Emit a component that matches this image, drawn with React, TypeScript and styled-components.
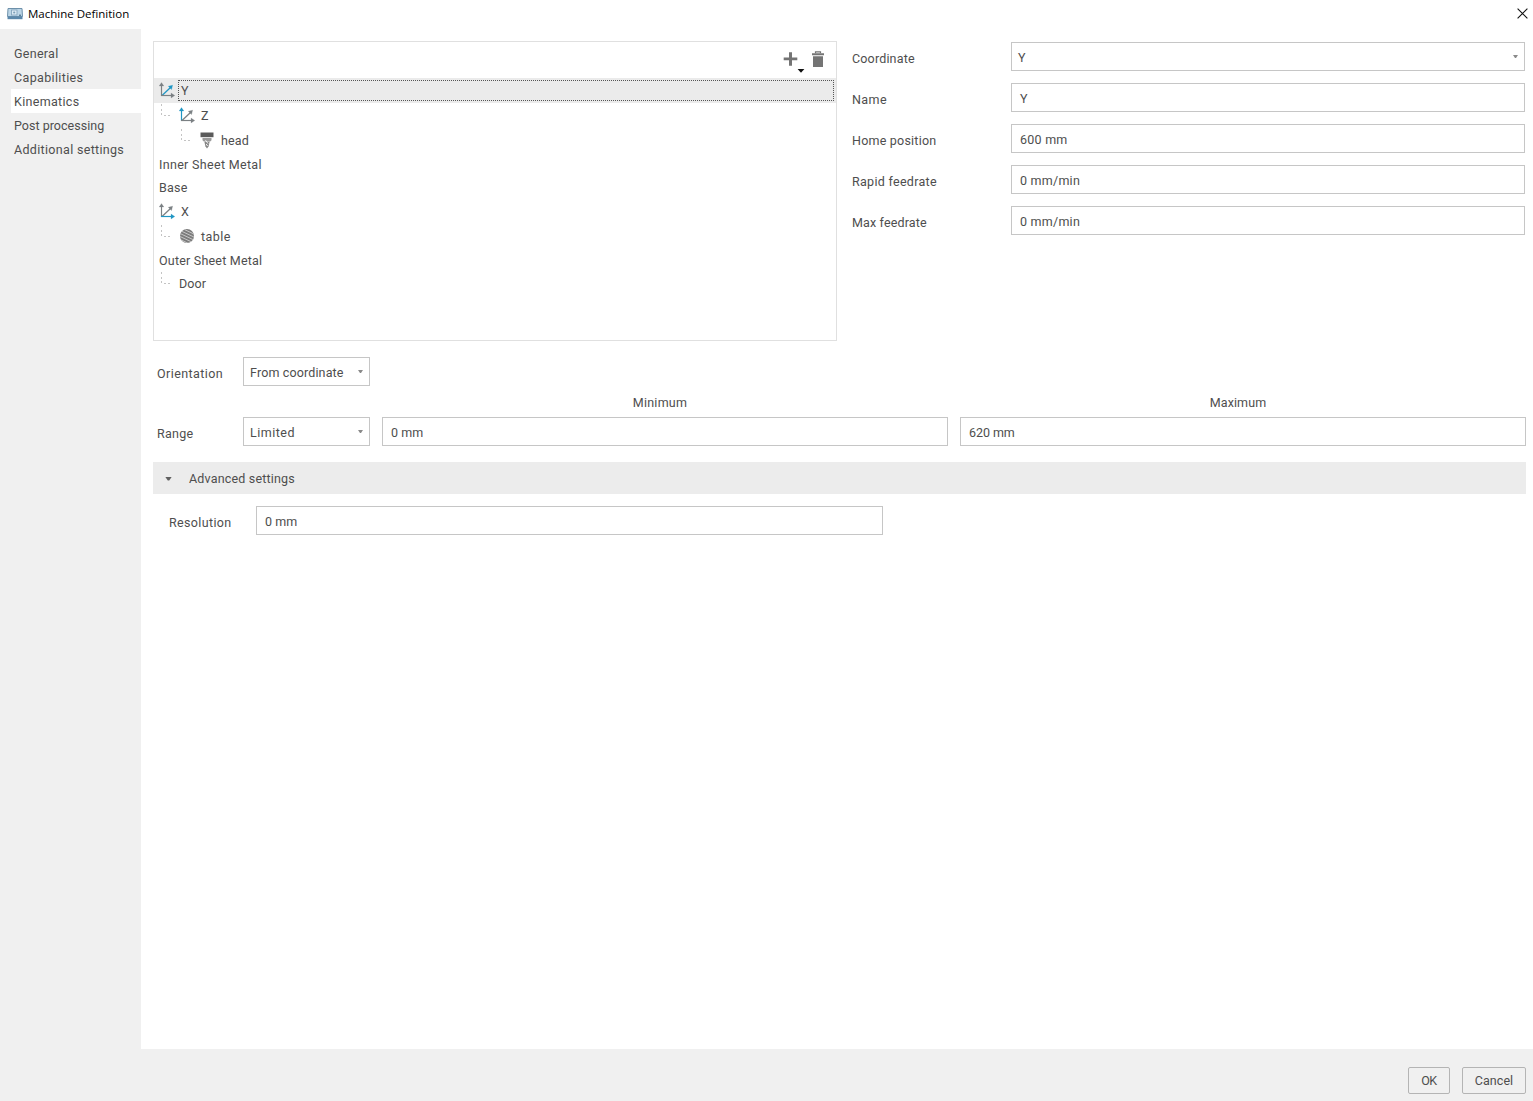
import React from "react";
import styled, { createGlobalStyle } from "styled-components";

const GlobalStyle = createGlobalStyle`
  * { box-sizing: border-box; }
  body { margin: 0; background: #fff; font-family: Roboto, "Liberation Sans", sans-serif; font-size: 12.5px; color: #4e4e4e; }
  svg { display: block; flex: none; }
`;

const Window = styled.div`
  width: 1533px;
  height: 1101px;
  display: flex;
  flex-direction: column;
  background: #f0f0f0;
  overflow: hidden;
`;

const TitleBar = styled.header`
  height: 29px;
  flex: none;
  display: flex;
  align-items: center;
  gap: 5px;
  padding: 0 5px 2px 7px;
  background: #fff;
`;

const Title = styled.span`
  flex: 1;
  font-family: "Open Sans", "Noto Sans", sans-serif;
  font-size: 11.5px;
  line-height: 16px;
  color: #000;
`;

const Body = styled.div`
  display: flex;
  height: 1020px;
  flex: none;
`;

const Sidebar = styled.nav`
  width: 141px;
  flex: none;
  padding: 12px 0 0 11px;
`;

const NavItem = styled.div<{ $active?: boolean }>`
  height: 24px;
  line-height: 26px;
  padding-left: 3px;
  background: ${(p) => (p.$active ? "#fff" : "transparent")};
`;

const Content = styled.main`
  flex: 1;
  min-width: 0;
  padding: 12px 7px 0 12px;
  background: #fff;
`;

const Text = styled.span<{ $track?: number }>`
  letter-spacing: ${(p) => (p.$track ?? 0.3) - 0.06}px;
  white-space: pre;
`;

const TopArea = styled.div`
  display: flex;
  gap: 15px;
  height: 300px;
`;

const TreePanel = styled.section`
  width: 684px;
  flex: none;
  border: 1px solid #e0e0e0;
`;

const Toolbar = styled.div`
  height: 36px;
  display: flex;
  justify-content: flex-end;
  padding: 9px 11px 0 0;
  gap: 6px;
`;

const Row = styled.div<{ $selected?: boolean; $icon?: boolean }>`
  height: ${(p) => (p.$icon ? 25 : 23)}px;
  display: flex;
  align-items: center;
  padding: 0 2px 0 5px;
  background: ${(p) => (p.$selected ? "#ebebeb" : "transparent")};
`;

const Indent = styled.div`
  width: 20px;
  flex: none;
`;

const RowLabel = styled.div<{ $icon?: boolean; $wide?: boolean; $focused?: boolean }>`
  flex: 1;
  height: 21px;
  line-height: 19px;
  margin-left: ${(p) => (p.$icon ? 2 : 0)}px;
  padding-left: ${(p) => (p.$icon ? 2 : 0)}px;
  border: ${(p) => (p.$focused ? "1px dotted #555" : "1px solid transparent")};
  border-left-width: ${(p) => (p.$icon ? 1 : 0)}px;
`;

const Form = styled.section`
  flex: 1;
  display: flex;
  flex-direction: column;
  gap: 12px;
  padding: 1px 1px 0 0;
`;

const FormRow = styled.div`
  display: flex;
  height: 29px;
`;

const Label = styled.label<{ $w: number }>`
  width: ${(p) => p.$w}px;
  height: 29px;
  flex: none;
  line-height: 33px;
`;

const Field = styled.div<{ $w?: number; $select?: boolean }>`
  ${(p) => (p.$w ? `width: ${p.$w}px; flex: none;` : "flex: 1;")}
  height: 29px;
  line-height: 29px;
  display: flex;
  justify-content: space-between;
  padding: 0 6px 0 ${(p) => (p.$select ? 6 : 8)}px;
  border: 1px solid #c6c6c6;
  background: #fff;
`;

const Caret = styled.i`
  width: 5px;
  height: 3px;
  margin-top: 12px;
  background: #8a8a8a;
  clip-path: polygon(0 0, 100% 0, 60% 100%, 40% 100%);
`;

const OrientationRow = styled.div`
  display: flex;
  padding: 0 0 0 4px;
  margin-top: 16px;
`;

const RangeHeader = styled.div`
  display: grid;
  grid-template-columns: 566px 566px;
  gap: 12px;
  height: 31px;
  padding: 0 0 0 224px;
  line-height: 33px;
  text-align: center;
`;

const RangeRow = styled.div`
  display: flex;
  gap: 12px;
  padding-left: 4px;
`;

const RangeType = styled.div`
  display: flex;
  width: 213px;
  flex: none;
`;

const SectionHeader = styled.div`
  display: flex;
  align-items: center;
  height: 32px;
  margin-top: 16px;
  padding: 1px 0 0 12px;
  gap: 17px;
  background: #ececec;
`;

const SectionCaret = styled.i`
  width: 7px;
  height: 4px;
  background: #606060;
  clip-path: polygon(0 0, 100% 0, 60% 100%, 40% 100%);
`;

const SectionBody = styled.div`
  display: flex;
  padding: 12px 0 0 16px;
`;

const Footer = styled.footer`
  flex: 1;
  display: flex;
  justify-content: flex-end;
  gap: 12px;
  padding: 18px 7px 0 0;
`;

const Button = styled.div<{ $w: number }>`
  width: ${(p) => p.$w}px;
  height: 27px;
  line-height: 26px;
  text-align: center;
  border: 1px solid #b4b4b4;
  border-radius: 2px;
`;

const BLUE = "#1f96c4";
const GRAY = "#7b8083";

function AxisIcon({ axis }: { axis: "X" | "Y" | "Z" }) {
  const c = (a: string) => (a === axis ? BLUE : GRAY);
  return (
    <svg width="17" height="17" viewBox="0 0 17 17" fill="none" strokeWidth="1.2">
      <g stroke={c("Y")} fill={c("Y")}>
        <path d="M3 13.5 11.5 5.5" />
        <path d="M13.6 3.2 12.5 7.6 9.3 4.3Z" strokeWidth=".3" />
      </g>
      <g stroke={c("Z")} fill={c("Z")}>
        <path d="M2.5 14V3" />
        <path d="M2.5 0.6 4.9 4H.1Z" strokeWidth=".2" />
      </g>
      <g stroke={c("X")} fill={c("X")}>
        <path d="M2 13.5H13" />
        <path d="M15.8 13.5 12 11V16Z" strokeWidth=".2" />
      </g>
    </svg>
  );
}

function HeadIcon() {
  return (
    <svg width="17" height="17" viewBox="0 0 17 17">
      <path d="M1.5 0.5H14.5V5.2H1.5Z" fill="#5a5a5a" />
      <path d="M3.5 6H12.5V8.2L11.2 9.6H4.8L3.5 8.2Z" fill="#999" />
      <path d="M5.4 9.8H10.6L9.6 14.2 8 16.6 6.4 14.2Z" fill="#858585" />
      <path d="M6.5 8.2 9 11.5M7.2 12 8.6 14" stroke="#f5f5f5" strokeWidth="1" />
    </svg>
  );
}

function TableIcon() {
  return (
    <svg width="17" height="17" viewBox="0 0 17 17">
      <defs>
        <clipPath id="disc"><circle cx="8" cy="8" r="7" /></clipPath>
      </defs>
      <circle cx="8" cy="8" r="7" fill="#7c7c7c" />
      <g clipPath="url(#disc)" stroke="#cfcfcf" strokeWidth=".9">
        <path d="M0 -1 17 7M0 2 17 10M0 5 17 13M0 8 17 16M0 11 17 19" />
      </g>
    </svg>
  );
}

function Guide() {
  return (
    <svg width="20" height="25" viewBox="0 0 20 25" fill="none" stroke="#c4c4c4" shapeRendering="crispEdges">
      <path d="M2.5 1V13" strokeDasharray="2 2.5" />
      <path d="M5 12.5H12" strokeDasharray="2 2" />
    </svg>
  );
}

function AddIcon() {
  return (
    <svg width="23" height="24" viewBox="0 0 23 24">
      <path d="M7 1.2H10V6.5H15.3V9.3H10V14.7H7V9.3H1.7V6.5H7Z" fill="#747474" />
      <path d="M15.6 18H22.4L19 21.8Z" fill="#111" />
    </svg>
  );
}

function TrashIcon() {
  return (
    <svg width="14" height="18" viewBox="0 0 14 18">
      <path d="M4.5 2.2V.8H9.5V2.2" fill="none" stroke="#747474" strokeWidth="1.2" />
      <path d="M1 2.2H13V4.2H1ZM2 5.2H12V16H2Z" fill="#747474" />
    </svg>
  );
}

function MachineIcon() {
  return (
    <svg width="16" height="12" viewBox="0 0 16 12">
      <path d="M1 .5H15L15.5 8.5H.5Z" fill="#bcd5e6" stroke="#6d90aa" />
      <path d="M.5 8.5H15.5V11.2H.5Z" fill="#5b87aa" />
      <rect x="4.5" y="2" width="5.5" height="5" fill="#dceaf3" stroke="#7d9fb8" strokeWidth=".8" />
      <circle cx="7.2" cy="4.5" r="1.1" fill="#7d9fb8" />
      <path d="M12 7.2H14" stroke="#345a78" />
    </svg>
  );
}

function CloseIcon() {
  return (
    <svg width="11" height="11" viewBox="0 0 11 11">
      <path d="M.6 .6 10.4 10.4M10.4 .6 .6 10.4" stroke="#111" strokeWidth="1.1" />
    </svg>
  );
}

const nav = [
  { label: "General", track: 0.34 },
  { label: "Capabilities", track: 0.42 },
  { label: "Kinematics", track: 0.38, active: true },
  { label: "Post processing", track: 0.08 },
  { label: "Additional settings", track: 0.38 },
];

type Node = { label: string; track?: number; depth: number; icon?: React.ReactNode; selected?: boolean };

const tree: Node[] = [
  { label: "Y", depth: 0, icon: <AxisIcon axis="Y" />, selected: true },
  { label: "Z", depth: 1, icon: <AxisIcon axis="Z" /> },
  { label: "head", track: 0.23, depth: 2, icon: <HeadIcon /> },
  { label: "Inner Sheet Metal", track: 0.38, depth: 0 },
  { label: "Base", depth: 0 },
  { label: "X", depth: 0, icon: <AxisIcon axis="X" /> },
  { label: "table", track: 0.5, depth: 1, icon: <TableIcon /> },
  { label: "Outer Sheet Metal", track: 0.27, depth: 0 },
  { label: "Door", track: 0.15, depth: 1 },
];

const fields = [
  { label: "Coordinate", track: 0.23, value: "Y", select: true },
  { label: "Name", track: 0.5, value: "Y" },
  { label: "Home position", track: 0.28, value: "600 mm" },
  { label: "Rapid feedrate", track: 0.36, value: "0 mm/min" },
  { label: "Max feedrate", track: 0.2, value: "0 mm/min" },
];

export default function App() {
  return (
    <Window>
      <GlobalStyle />
      <TitleBar>
        <MachineIcon />
        <Title>Machine Definition</Title>
        <CloseIcon />
      </TitleBar>
      <Body>
        <Sidebar>
          {nav.map((n) => (
            <NavItem key={n.label} $active={n.active}>
              <Text $track={n.track}>{n.label}</Text>
            </NavItem>
          ))}
        </Sidebar>
        <Content>
          <TopArea>
            <TreePanel>
              <Toolbar>
                <AddIcon />
                <TrashIcon />
              </Toolbar>
              {tree.map((n) => (
                <Row key={n.label} $selected={n.selected} $icon={!!n.icon}>
                  {n.depth > 1 && <Indent />}
                  {n.depth > 0 && <Guide />}
                  {n.icon}
                  <RowLabel $icon={!!n.icon} $focused={n.selected}>
                    <Text $track={n.track}>{n.label}</Text>
                  </RowLabel>
                </Row>
              ))}
            </TreePanel>
            <Form>
              {fields.map((f) => (
                <FormRow key={f.label}>
                  <Label $w={159}><Text $track={f.track}>{f.label}</Text></Label>
                  <Field $select={f.select}>
                    <Text>{f.value}</Text>
                    {f.select && <Caret />}
                  </Field>
                </FormRow>
              ))}
            </Form>
          </TopArea>
          <OrientationRow>
            <Label $w={86}><Text $track={0.48}>Orientation</Text></Label>
            <Field $w={127} $select>
              <Text $track={0.2}>From coordinate</Text>
              <Caret />
            </Field>
          </OrientationRow>
          <RangeHeader>
            <Text $track={0.3}>Minimum</Text>
            <Text $track={0.15}>Maximum</Text>
          </RangeHeader>
          <RangeRow>
            <RangeType>
              <Label $w={86}><Text $track={0.34}>Range</Text></Label>
              <Field $w={127} $select>
                <Text $track={0.55}>Limited</Text>
                <Caret />
              </Field>
            </RangeType>
            <Field><Text $track={0.14}>0 mm</Text></Field>
            <Field><Text $track={0}>620 mm</Text></Field>
          </RangeRow>
          <SectionHeader>
            <SectionCaret />
            <Text $track={0.24}>Advanced settings</Text>
          </SectionHeader>
          <SectionBody>
            <Label $w={87}><Text $track={0.42}>Resolution</Text></Label>
            <Field $w={627}><Text $track={0.14}>0 mm</Text></Field>
          </SectionBody>
        </Content>
      </Body>
      <Footer>
        <Button $w={42}><Text $track={-0.3}>OK</Text></Button>
        <Button $w={64}><Text $track={0.1}>Cancel</Text></Button>
      </Footer>
    </Window>
  );
}
